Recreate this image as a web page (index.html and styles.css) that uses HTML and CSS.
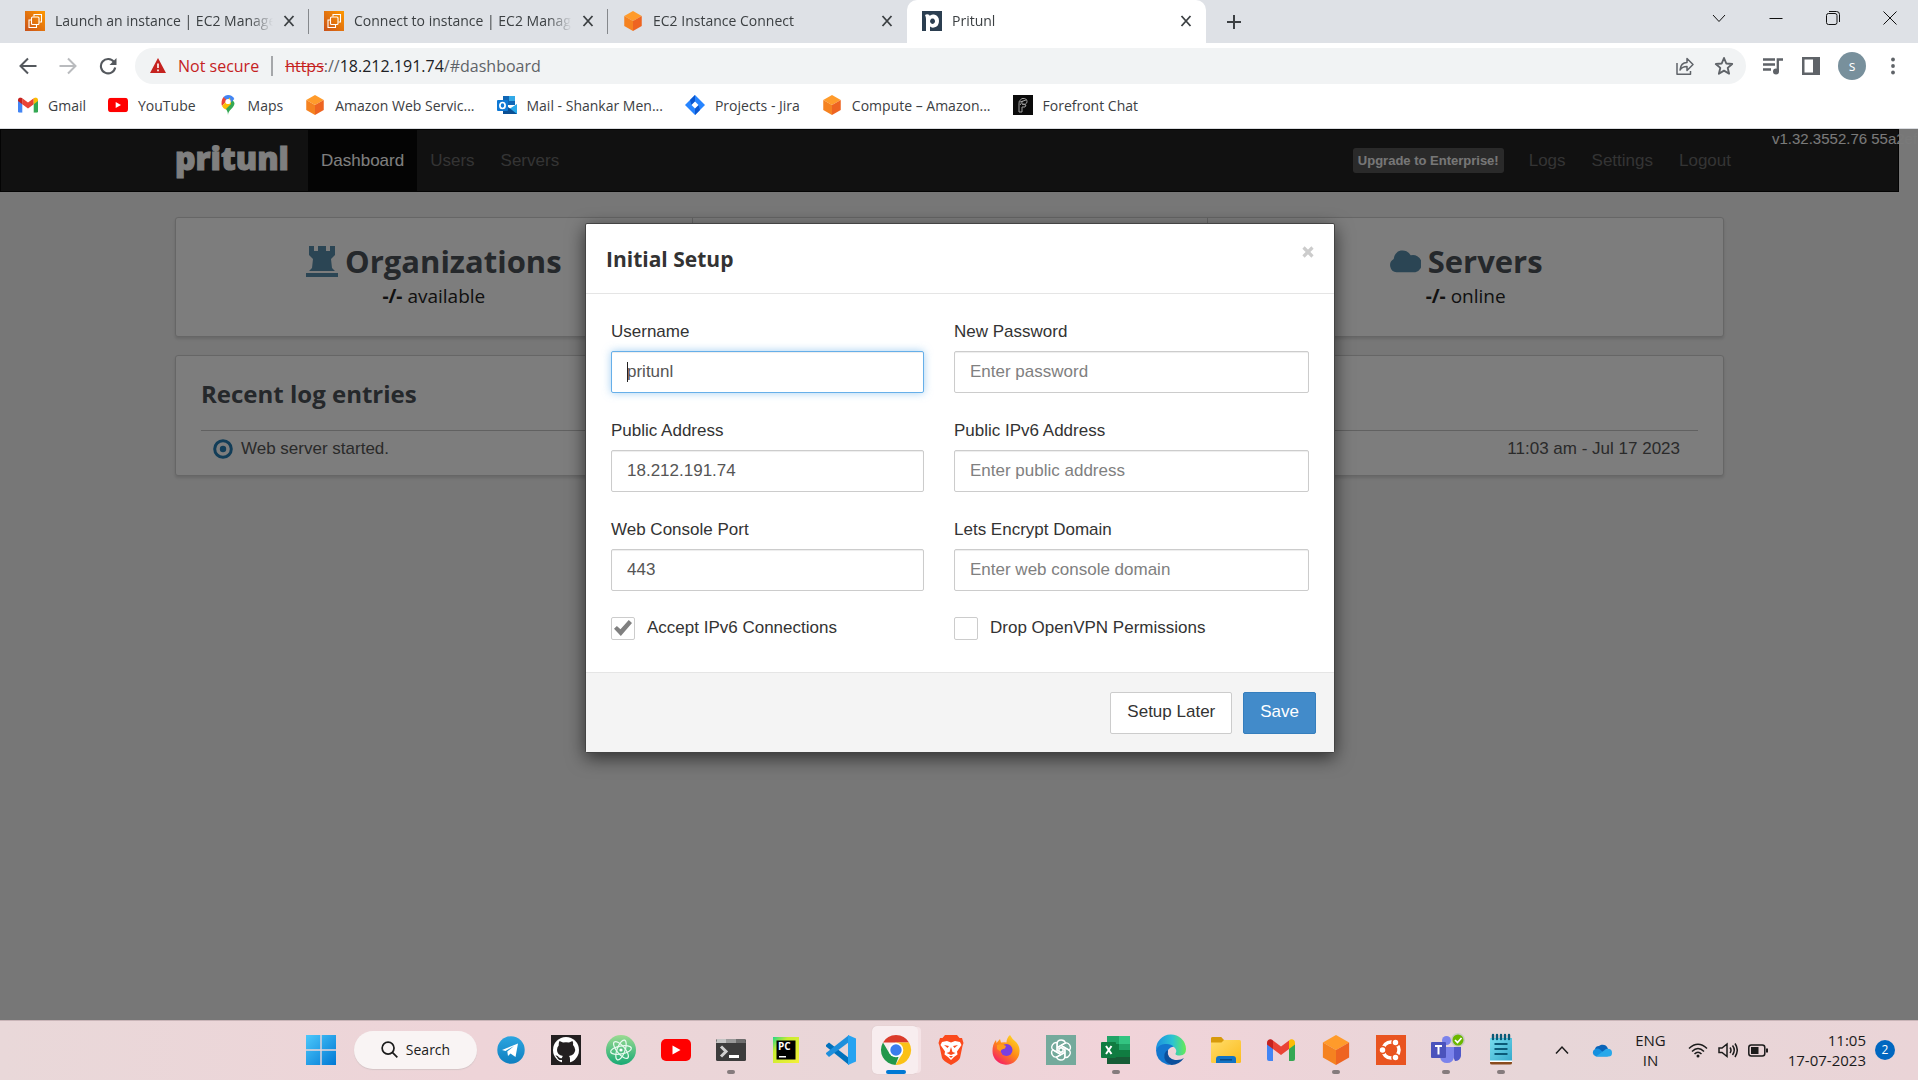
FILE: index.html
```html
<!DOCTYPE html>
<html lang="en">
<head>
<meta charset="utf-8">
<title>Pritunl</title>
<link rel="stylesheet" href="styles.css">
</head>
<body>
<svg class="sprite" aria-hidden="true">
  <defs>
    <linearGradient id="g-ec2" x1="0" y1="1" x2="1" y2="0"><stop offset="0" stop-color="#c8511b"/><stop offset="1" stop-color="#f90"/></linearGradient>
    <linearGradient id="g-win" x1="0" y1="0" x2="1" y2="1"><stop offset="0" stop-color="#4cc8fb"/><stop offset="1" stop-color="#0078d4"/></linearGradient>
    <linearGradient id="g-tg" x1="0" y1="0" x2="0" y2="1"><stop offset="0" stop-color="#2ca5e0"/><stop offset="1" stop-color="#0f7fc0"/></linearGradient>
    <linearGradient id="g-atom" x1="0" y1="0" x2="0" y2="1"><stop offset="0" stop-color="#9bdb92"/><stop offset="1" stop-color="#17a974"/></linearGradient>
    <linearGradient id="g-pc" x1="0" y1="0" x2="1" y2="1"><stop offset="0" stop-color="#21d789"/><stop offset=".3" stop-color="#c8ec30"/><stop offset="1" stop-color="#f4f03a"/></linearGradient>
    <linearGradient id="g-ff" x1=".9" y1="0" x2=".2" y2="1"><stop offset="0" stop-color="#ffe226"/><stop offset=".5" stop-color="#ff8a16"/><stop offset="1" stop-color="#f5156c"/></linearGradient>
    <linearGradient id="g-edge" x1="0" y1="0" x2="1" y2="0"><stop offset="0" stop-color="#1b8fe0"/><stop offset=".55" stop-color="#2bc3d2"/><stop offset="1" stop-color="#66eb55"/></linearGradient>
    <linearGradient id="g-fold" x1="0" y1="0" x2="1" y2="1"><stop offset="0" stop-color="#ffdc6a"/><stop offset="1" stop-color="#fcbc1d"/></linearGradient>
    <linearGradient id="g-note" x1="0" y1="0" x2="1" y2="1"><stop offset="0" stop-color="#78def0"/><stop offset="1" stop-color="#35a9cb"/></linearGradient>
  </defs>
  <symbol id="i-x" viewBox="0 0 12 12"><path d="M1.500 1l9 10M10.500 1l-9 10" fill="none" stroke="currentColor" stroke-width="1.800"/></symbol>
  <symbol id="i-ec2" viewBox="0 0 20 20"><path fill="url(#g-ec2)" d="M0 0h20v20H0z"/><g fill="none" stroke="#fff" stroke-width="1.100"><rect x="6.500" y="6" width="7.500" height="7.500" rx="1"/><path d="M9 5.500V3.500h7.500V11H14.500M11.500 14v2.500H4V9H6"/></g></symbol>
  <symbol id="i-cube" viewBox="0 0 30 32"><path fill="#ff9b2b" d="M15 0l14 8-14 8L1 8z"/><path fill="#f58220" d="M1 8l14 8v16L1 24z"/><path fill="#ee6421" d="M29 8l-14 8v16l14-8z"/></symbol>
  <symbol id="i-gmail" viewBox="0 0 28 22"><path fill="#4285f4" d="M0 4l6 4v14H2a2 2 0 0 1-2-2z"/><path fill="#34a853" d="M28 4l-6 4v14h4a2 2 0 0 0 2-2z"/><path fill="#ea4335" d="M6 1.500l8 6 8-6V10l-8 6-8-6z"/><path fill="#c5221f" d="M0 4C0 0 4-.5 6 1.500V10L0 5.500z"/><path fill="#fbbc04" d="M28 4c0-4-4-4.500-6-2.500V10l6-4.500z"/></symbol>
  <symbol id="i-yt" viewBox="0 0 30 22"><rect width="30" height="22" rx="5" fill="#f00"/><path fill="#fff" d="M11.500 6.500v9l8-4.500z"/></symbol>
</svg>

<header class="browser">
  <div class="tabstrip">
    <div class="tab">
      <svg class="fav"><use href="#i-ec2"/></svg><span class="tab-title">Launch an instance | EC2 Manage</span>
      <button class="tab-x" aria-label="Close tab"><svg><use href="#i-x"/></svg></button>
    </div>
    <div class="tab">
      <svg class="fav"><use href="#i-ec2"/></svg><span class="tab-title">Connect to instance | EC2 Manag</span>
      <button class="tab-x" aria-label="Close tab"><svg><use href="#i-x"/></svg></button>
    </div>
    <div class="tab plain">
      <svg class="fav"><use href="#i-cube"/></svg><span class="tab-title">EC2 Instance Connect</span>
      <button class="tab-x" aria-label="Close tab"><svg><use href="#i-x"/></svg></button>
    </div>
    <div class="tab active">
      <svg class="fav" viewBox="0 0 20 20"><path fill="#2b3e50" d="M0 0h20v20H0z"/><path fill="#fff" fill-rule="evenodd" d="M3 4q2-1.500 4.500 0v1Q9 3 12 3.500q5 1 5 6.500t-5 6.500q-2.500.5-4-1V20H4V8q0-2-1-4zm7.500 3.500a2.500 2.700 0 1 0 .1 0z"/></svg><span class="tab-title">Pritunl</span>
      <button class="tab-x" aria-label="Close tab"><svg><use href="#i-x"/></svg></button>
    </div>
    <button class="new-tab" aria-label="New tab"><svg viewBox="0 0 16 16"><path d="M8 1v14M1 8h14" stroke="currentColor" stroke-width="2"/></svg></button>
    <div class="win-controls">
      <button aria-label="Search tabs"><svg viewBox="0 0 14 14"><path d="M1 4l6 6.500L13 4"/></svg></button>
      <button aria-label="Minimize"><svg viewBox="0 0 14 14"><path d="M.5 7.500h13"/></svg></button>
      <button aria-label="Restore"><svg viewBox="0 0 14 14"><rect x=".5" y="2.500" width="10.500" height="11" rx="2"/><path d="M3 .5h7.500q3 0 3 3V11"/></svg></button>
      <button aria-label="Close"><svg viewBox="0 0 14 14"><path d="M.5.5l13 13M13.500.5l-13 13"/></svg></button>
    </div>
  </div>
  <div class="toolbar">
    <button class="nav-btn" aria-label="Back"><svg viewBox="0 0 18 18"><path d="M17.500 9h-16M9 1.500L1.500 9 9 16.500" fill="none" stroke="#54585d" stroke-width="2"/></svg></button>
    <button class="nav-btn" aria-label="Forward"><svg viewBox="0 0 18 18"><path d="M.5 9h16M9 1.500L16.500 9 9 16.500" fill="none" stroke="#b9bbbe" stroke-width="2"/></svg></button>
    <button class="nav-btn" aria-label="Reload"><svg viewBox="0 0 18 18"><path d="M15 5A7.200 7.200 0 1 0 16.200 10.500" fill="none" stroke="#54585d" stroke-width="2.100"/><path fill="#54585d" d="M17.500 1v7h-7z"/></svg></button>
    <div class="omnibox">
      <svg class="warn" viewBox="0 0 16 15"><path fill="#c5221f" d="M8 0l8 15H0z"/><path d="M8 5.500v4.500M8 11.500v1.800" stroke="#fff" stroke-width="1.600"/></svg>
      <span class="insecure">Not secure</span>
      <span class="url"><s>https</s>://<b>18.212.191.74</b>/#dashboard</span>
      <button aria-label="Share"><svg viewBox="0 0 20 20"><path d="M3 7v11.200h13.500V15" /><path d="M6 14c.5-5 3-7.500 7-7.500V2.500l6 6-6 6v-4c-3 0-5.500 1-7 3.500z"/></svg></button>
      <button aria-label="Bookmark"><svg viewBox="0 0 20 20"><path stroke-width="1.900" d="M10 2l2.300 5.500 5.900.5-4.500 3.900 1.400 5.800L10 14.600l-5.100 3.100 1.400-5.800L1.800 8l5.900-.5z"/></svg></button>
    </div>
    <div class="ext">
      <button aria-label="Media"><svg viewBox="0 0 20 18"><path d="M0 2.500h12M0 7.500h12M0 12.500h8M14.800 14V2.500H20" fill="none" stroke="#5f6368" stroke-width="2.300"/><ellipse cx="13" cy="14.500" rx="3" ry="3" fill="#5f6368"/></svg></button>
      <button aria-label="Side panel"><svg viewBox="0 0 20 18"><path fill="#5f6368" fill-rule="evenodd" d="M1 0h18v18H1zm2.500 2.500v13h8.500v-13z"/></svg></button>
      <button class="avatar" aria-label="Profile">s</button>
      <button aria-label="Menu"><svg viewBox="0 0 20 18"><circle cx="10" cy="2.500" r="1.900" fill="#5f6368"/><circle cx="10" cy="9" r="1.900" fill="#5f6368"/><circle cx="10" cy="15.500" r="1.900" fill="#5f6368"/></svg></button>
    </div>
  </div>
  <nav class="bookmarks" aria-label="Bookmarks">
    <a href="#"><svg viewBox="0 -3 28 28"><use href="#i-gmail" width="28" height="22"/></svg>Gmail</a>
    <a href="#"><svg viewBox="0 -4 30 30"><use href="#i-yt" width="30" height="22"/></svg>YouTube</a>
    <a href="#"><svg viewBox="0 0 20 20"><path fill="#34a853" d="M10 20c0-4-2-6-4-8.500L13.500 3l3 5c0 5-6.500 7-6.500 12z"/><path fill="#4285f4" d="M10 0q4.500 0 6.300 4L10 10 5.500 2Q7.500 0 10 0z"/><path fill="#ea4335" d="M5.500 2L9 5.500 4 11Q2.500 6 5.500 2z"/><path fill="#fbbc04" d="M4 11l8-8.500L13 9l-5.500 5.500Q5 13 4 11z"/><circle cx="10" cy="6.500" r="2.600" fill="#fff"/></svg>Maps</a>
    <a href="#"><svg><use href="#i-cube"/></svg>Amazon Web Servic...</a>
    <a href="#"><svg viewBox="0 0 20 20"><path fill="#1066b5" d="M6 1h12v9H6z"/><path fill="#32a9e7" d="M12 1h6v5h-6z"/><path fill="#28a8ea" d="M6 9l7 4.500L20 9v10H6z"/><path fill="#0a4f94" d="M6 9l7 4.500L20 19H6z"/><rect y="5" width="11" height="11" rx="1" fill="#0f78d4"/><ellipse cx="5.500" cy="10.500" rx="2.600" ry="3" fill="none" stroke="#fff" stroke-width="1.700"/></svg>Mail - Shankar Men...</a>
    <a href="#"><svg viewBox="0 0 20 20"><path fill="#2684ff" d="M10 0l10 10-10 10L0 10z"/><path fill="#0b57d0" d="M10 0v7l-3.500 3L5 5zM10 20v-7l3.500-3 1.500 5z"/><path fill="#fff" d="M10 6.500l3.500 3.500-3.500 3.500L6.500 10z"/></svg>Projects - Jira</a>
    <a href="#"><svg><use href="#i-cube"/></svg>Compute – Amazon...</a>
    <a href="#"><svg viewBox="0 0 20 20"><path fill="#0b0b0b" d="M0 0h20v20H0z"/><path d="M6 17V9q-1-3 3-5.500 5-.5 5 3T9 9l4 1q0 3-4 2v5zM7 7l6-2M7 10l3-4" fill="none" stroke="#a0a0a0"/></svg>Forefront Chat</a>
  </nav>
</header>

<main class="viewport">
  <div class="page">
    <div class="navbar">
      <div class="container navbar-in">
        <a class="logo" href="#">pritunl</a>
        <a class="nav-link current" href="#">Dashboard</a>
        <a class="nav-link" href="#">Users</a>
        <a class="nav-link" href="#">Servers</a>
        <div class="nav-right">
          <a class="upgrade" href="#">Upgrade to Enterprise!</a>
          <a class="nav-link" href="#">Logs</a>
          <a class="nav-link" href="#">Settings</a>
          <a class="nav-link" href="#">Logout</a>
        </div>
      </div>
      <span class="version">v1.32.3552.76 55a2ef</span>
    </div>
    <div class="container content">
      <section class="card stats">
        <div class="stat">
          <h2><svg viewBox="0 0 32 32"><path fill="#568ba8" d="M3 1h5v5h4V1h8v5h4V1h5v9l-4 4 1 9 3 3H3l3-3 1-9-4-4zM0 28h32v4H0z"/></svg>Organizations</h2>
          <p><b>-/-</b> available</p>
        </div>
        <div class="stat">
          <h2>Users</h2>
          <p><b>-/-</b> online</p>
        </div>
        <div class="stat">
          <h2><svg viewBox="0 0 34 32"><path fill="#568ba8" d="M8 28a7.500 7.500 0 0 1-3-14 9.500 9.500 0 0 1 18-4 9 9 0 0 1 5 18z"/></svg>Servers</h2>
          <p><b>-/-</b> online</p>
        </div>
      </section>
      <section class="card log">
        <h3>Recent log entries</h3>
        <div class="entry">
          <svg viewBox="0 0 20 20"><circle cx="10" cy="10" r="8.300" fill="none" stroke="#257bb0" stroke-width="3"/><circle cx="10" cy="10" r="3.200" fill="#257bb0"/></svg>
          <span>Web server started.</span>
          <time>11:03 am - Jul 17 2023</time>
        </div>
      </section>
    </div>
  </div>
  <div class="backdrop">
    <form class="modal" role="dialog" aria-label="Initial Setup">
      <div class="modal-head">
        <h1>Initial Setup</h1>
        <button type="button" class="modal-x" aria-label="Close"><svg viewBox="0 0 12 12"><path d="M1.500 1.500l9 9M10.500 1.500l-9 9" stroke="#ccc" stroke-width="3.200"/></svg></button>
      </div>
      <div class="modal-body">
        <div class="field focused"><label for="user">Username</label><input id="user" type="text" value="pritunl"><i class="caret"></i></div>
        <div class="field"><label for="pass">New Password</label><input id="pass" type="password" placeholder="Enter password"></div>
        <div class="field"><label for="addr">Public Address</label><input id="addr" type="text" value="18.212.191.74"></div>
        <div class="field"><label for="addr6">Public IPv6 Address</label><input id="addr6" type="text" placeholder="Enter public address"></div>
        <div class="field"><label for="port">Web Console Port</label><input id="port" type="text" value="443"></div>
        <div class="field"><label for="dom">Lets Encrypt Domain</label><input id="dom" type="text" placeholder="Enter web console domain"></div>
        <label class="check"><input type="checkbox" checked>Accept IPv6 Connections</label>
        <label class="check"><input type="checkbox">Drop OpenVPN Permissions</label>
      </div>
      <div class="modal-foot">
        <button type="button" class="btn">Setup Later</button>
        <button type="button" class="btn primary">Save</button>
      </div>
    </form>
  </div>
</main>

<footer class="taskbar">
  <button class="app" aria-label="Start"><svg viewBox="0 0 30 30"><path fill="url(#g-win)" d="M0 0h14.300v14.300H0zM15.700 0H30v14.300H15.700zM0 15.700h14.300V30H0zM15.700 15.700H30V30H15.700z"/></svg></button>
  <button class="search"><svg viewBox="0 0 18 18"><circle cx="7.500" cy="7.500" r="6.300"/><path d="M12 12l5.300 5.300"/></svg>Search</button>
  <div class="apps">
    <button class="app" aria-label="Telegram"><svg viewBox="0 0 30 30"><circle cx="15" cy="15" r="13.700" fill="url(#g-tg)"/><path fill="#fff" d="M6 15L22 8.500 19.500 22l-5-3.500-2.500 2.500-.7-4.500L18 11l-8.500 5z"/></svg></button>
    <button class="app" aria-label="GitHub"><svg viewBox="0 0 30 30"><path fill="#231f20" d="M0 0h30v30H0z"/><circle cx="15" cy="15" r="13" fill="#fff"/><path fill="#231f20" d="M8.500 6l3.500 1.500q3-.7 6 0L21.500 6q1 2 .5 4 4 4.500.5 9-1.500 1.700-4.500 2 1 1 1 3v4h-8v-3q-4 .6-5-3-1.500-1-1.500-1.500 2-.5 3.500 2 1.500 1 3 .4 0-1.500 1-2-6-1-6-6 0-3 1.700-4.500-.4-2 .8-4.400z"/></svg></button>
    <button class="app" aria-label="Atom"><svg viewBox="0 0 30 30"><circle cx="15" cy="15" r="15" fill="url(#g-atom)"/><g fill="none" stroke="#e8f9ef" stroke-width="1.200"><ellipse cx="15" cy="15" rx="4" ry="10.500" transform="rotate(20 15 15)"/><ellipse cx="15" cy="15" rx="4" ry="10.500" transform="rotate(80 15 15)"/><ellipse cx="15" cy="15" rx="4" ry="10.500" transform="rotate(140 15 15)"/></g><circle cx="15" cy="15" r="1.600" fill="#fff"/></svg></button>
    <button class="app" aria-label="YouTube"><svg viewBox="0 -4 30 30"><use href="#i-yt" width="30" height="22"/></svg></button>
    <button class="app running" aria-label="Terminal"><svg viewBox="0 0 30 30"><rect y="4" width="30" height="22" rx="1.500" fill="#3c3c3c"/><path fill="#c4c4c4" d="M1 4h9v4H0z"/><path fill="#999" d="M10 4h10v4H10z"/><path fill="#6d6d6d" d="M20 4h9l1 4H20z"/><path d="M5 11.500l5 5-5 5" fill="none" stroke="#d0d0d0" stroke-width="3"/><path fill="#fff" d="M13 20h10v3H13z"/></svg></button>
    <button class="app" aria-label="PyCharm"><svg viewBox="0 0 30 30"><path fill="url(#g-pc)" d="M2 2h26v26H2z"/><path fill="#000" d="M5.500 5.500h19v19h-19z"/><path fill="#fff" d="M8 21h7v1.500H8z"/><text x="7" y="15" font-size="10" font-weight="700" fill="#fff">PC</text></svg></button>
    <button class="app" aria-label="Visual Studio Code"><svg viewBox="0 0 30 30"><path fill="#0071bc" d="M0 10l3-2.500L23 23v7L0 11.500z"/><path fill="#1e8fdc" d="M0 19l3 3L23 7V0L0 18z"/><path fill="#26a3f1" d="M22 0l8 3.500v23L22 30z"/></svg></button>
    <button class="app running here" aria-label="Google Chrome"><svg viewBox="0 0 30 30"><path fill="#db3b2b" d="M2 7.500a15 15 0 0 1 26 0H15z"/><path fill="#fbc116" d="M28 7.500A15 15 0 0 1 14.500 30L21.500 18.500 15 7.500z"/><path fill="#22974b" d="M2 7.500L8.500 18.500 17.500 22 14.500 30A15 15 0 0 1 2 7.500z"/><circle cx="15" cy="15" r="7.300" fill="#fff"/><circle cx="15" cy="15" r="5.700" fill="#3b7ded"/></svg></button>
    <button class="app" aria-label="Brave"><svg viewBox="0 0 30 30"><path fill="#fb4a1d" d="M9 0h12l2.500 3H26l1.500 5-1 3L24 23q-1 3-9 7-8-4-9-7L3.500 11l-1-3L4 3h2.500z"/><path fill="#fff" d="M6 7l5-1 4 1.500L19 6l5 1 1.500 3-4.500 6.500.5 3-3.500 2.500-3 3-3-3-3.500-2.500.5-3L4.500 10z"/><path fill="#fb4a1d" d="M8 10l5 1-1.500 2zM22 10l-5 1 1.500 2zM15 12l1.500 5 3 1-4.500 2-4.500-2 3-1zM13 21h4l-2 2z"/></svg></button>
    <button class="app" aria-label="Firefox"><svg viewBox="0 0 30 30"><path fill="url(#g-ff)" d="M19 0q2 4 6 7 4 4.500 3.500 9.500A13.500 13.500 0 0 1 1.500 16Q1.500 9 5 5l.5 3L9 4l1 3.500q4-.5 5.500 0Q15.500 3 19 0z"/><circle cx="15.500" cy="15" r="6" fill="#7a3fe0"/><path fill="#ff9a1c" d="M6 10q5-2 9 1l-1 2.500q-4 .5-4.500 3L6 14z"/></svg></button>
    <button class="app" aria-label="ChatGPT"><svg viewBox="0 0 30 30"><path fill="#74aa9c" d="M0 0h30v30H0z"/><g fill="none" stroke="#fff" stroke-width="1.300"><path id="petal" d="M11 17.300v-8q0-4.300 4.200-4.300 3.300 0 4.300 3l-6.500 3.700v5"/><use href="#petal" transform="rotate(60 15 15)"/><use href="#petal" transform="rotate(120 15 15)"/><use href="#petal" transform="rotate(180 15 15)"/><use href="#petal" transform="rotate(240 15 15)"/><use href="#petal" transform="rotate(300 15 15)"/></g></svg></button>
    <button class="app running" aria-label="Excel"><svg viewBox="0 0 30 30"><path fill="#21a366" d="M6 1h12v8H6z"/><path fill="#33c481" d="M18 1h11v8H18z"/><path fill="#107c41" d="M6 9h23v13H6z"/><path fill="#21a366" d="M18 9h11v6H18z"/><path fill="#185c37" d="M6 22h23v7H6z"/><rect y="7" width="15" height="16" rx="1" fill="#107c41"/><path d="M5 11l5.500 8M10.500 11L5 19" stroke="#fff" stroke-width="2"/></svg></button>
    <button class="app" aria-label="Edge"><svg viewBox="0 0 30 30"><path fill="url(#g-edge)" d="M0 15a15 15 0 0 1 30-1q0 6-6 6.500-5 0-4.500-2 2-3-1-6Q12 8 4 12q-3 2-4 3z"/><path fill="#1377cf" d="M0 15q3-6 9-6 6-.5 8.500 2.500Q11 13 11 19q.5 7 9 9-4 2.500-9 1.500Q0 26 0 15z"/><path fill="#0c4f9c" d="M12 15q-1.500 8 7 10 6 .5 9-2-5 7-12.500 7Q7 27 8.500 19q1-3 3.500-4z"/></svg></button>
    <button class="app" aria-label="File Explorer"><svg viewBox="0 0 30 30"><path fill="#d79a0b" d="M0 4q0-2 2-2h8l3 4v5H0z"/><rect y="5" width="30" height="23" rx="1.500" fill="url(#g-fold)"/><path fill="#d79a0b" d="M0 4q0-2 2-2h8l3 3-2.500 2.500H0z"/><path fill="#1273c4" d="M5 28v-4q0-3 3-3h14q3 0 3 3v4z"/><path fill="#0a4b86" d="M9 24h12v1.500H9z"/></svg></button>
    <button class="app" aria-label="Gmail"><svg viewBox="-1 -4 30 30"><use href="#i-gmail" width="28" height="22"/></svg></button>
    <button class="app running" aria-label="AWS"><svg><use href="#i-cube"/></svg></button>
    <button class="app" aria-label="Ubuntu"><svg viewBox="0 0 30 30"><path fill="#e95420" d="M0 0h30v30H0z"/><circle cx="15" cy="15" r="8" fill="none" stroke="#fff" stroke-width="3.500"/><g fill="#fff" stroke="#e95420" stroke-width="1.500"><circle cx="6.500" cy="15" r="3.500"/><circle cx="19.500" cy="7.500" r="3.500"/><circle cx="19.500" cy="22.500" r="3.500"/></g></svg></button>
    <button class="app running" aria-label="Teams"><svg viewBox="0 0 30 30"><circle cx="15.500" cy="5.500" r="4.500" fill="#7b83eb"/><path fill="#5059c9" d="M18 12h12v9q-1 5-6 5z"/><path fill="#7b83eb" d="M9 12h14v10q-1 6-7 6t-7-6z"/><rect y="7" width="15" height="16" rx="1" fill="#4b53bc"/><path d="M4 11h7M7.500 11v8.500" stroke="#fff" stroke-width="2"/><circle cx="27" cy="5" r="7" fill="#c9c9c4"/><circle cx="27" cy="5" r="5.500" fill="#6bb700"/><path d="M24 5l2.500 2.500L30.500 3" fill="none" stroke="#fff" stroke-width="1.700"/></svg></button>
    <button class="app running" aria-label="Notepad"><svg viewBox="0 0 30 30"><path fill="url(#g-note)" d="M4 3h22v23H4z"/><path fill="#8a4b1d" d="M4 27h22v1q0 1.500-2 1.500H6q-2 0-2-1.500z"/><path fill="#fff" d="M4 25.500h22V27H4z"/><path d="M8.500 9h13M8.500 14h13M8.500 19h13" stroke="#0a5a78" stroke-width="2"/><path d="M7 0v4M11 0v4M15 0v4M19 0v4M23 0v4" stroke="#0a5a78" stroke-width="2.400" stroke-linecap="round"/></svg></button>
  </div>
  <div class="tray">
    <svg class="t-up" viewBox="0 0 14 10"><path d="M1 8.500l6-6.500 6 6.500"/></svg>
    <svg class="t-cloud" viewBox="0 0 20 14"><path fill="#0a63b8" d="M3 6a4 4 0 0 1 4-3 5.500 5.500 0 0 1 9 3l-6 4z"/><path fill="#1490df" d="M4 13.500A4 4 0 0 1 3 6q3-1 5 .5l8 7z"/><path fill="#28a8ea" d="M4 13.500L14 6q6-1 6 4 0 3.500-3.500 3.500z"/></svg>
    <span class="lang">ENG<br>IN</span>
    <svg class="t-ico" viewBox="0 0 20 20"><path d="M1 8.500q9-8.500 18 0M4 11.500q6-6 12 0M6.500 14q3.500-3.500 7 0"/><circle cx="10" cy="16" r="1.500" fill="#1b1b1b" stroke="none"/></svg>
    <svg class="t-ico" viewBox="0 0 20 20"><path d="M1 8v4.500h3l5 4V4L4 8zM12 7.500q2 2.700 0 5.500M14.500 5.500q3.500 4.500 0 9.500M17 3.500q4.500 6.500 0 13.500"/></svg>
    <svg class="t-ico" viewBox="0 0 20 20"><rect x=".8" y="5" width="16" height="11" rx="2.500"/><path fill="#1b1b1b" stroke="none" d="M3 7h7.500v7H3zM18 8.500h2v4h-2z"/></svg>
    <span class="clock">11:05<br>17-07-2023</span>
    <span class="badge">2</span>
  </div>
</footer>
</body>
</html>
```
FILE: styles.css
```css
* { box-sizing: border-box; }
body {
  margin: 0;
  min-height: 100vh;
  display: flex;
  flex-direction: column;
  font-family: "Open Sans", "Noto Sans", sans-serif;
  font-size: 14px;
  color: #3c4043;
  overflow-x: hidden;
}
button { border: 0; padding: 0; background: none; font: inherit; color: inherit; }
a { color: inherit; text-decoration: none; }
h1, h2, h3, p { margin: 0; }
svg { display: block; flex: none; }
.sprite { position: absolute; width: 0; height: 0; }

/* Browser window */
.browser { background: #fff; border-bottom: 1px solid #dadce0; }
.tabstrip { display: flex; height: 43px; background: #dee1e6; padding-left: 10px; }
.tab {
  position: relative;
  display: flex;
  align-items: center;
  width: 299px;
  padding: 6px 14px 8px 15px;
  gap: 10px;
}
.tab:nth-child(-n+2)::after {
  content: "";
  position: absolute;
  right: 0;
  top: 9px;
  width: 1px;
  height: 25px;
  background: #85888c;
}
.tab.active { background: #fff; border-radius: 10px 10px 0 0; }
.fav { width: 20px; height: 20px; }
.tab-title {
  flex: 1;
  overflow: hidden;
  white-space: nowrap;
  mask-image: linear-gradient(to right, #000 calc(100% - 24px), transparent);
}
.tab-x { width: 12px; height: 12px; }
.tab-x svg { width: 12px; height: 12px; }
.new-tab { width: 16px; margin-left: 20px; }
.new-tab svg { width: 16px; height: 16px; }
.win-controls { display: flex; margin-left: auto; height: 36px; }
.win-controls button { width: 57px; display: grid; place-items: center; }
.win-controls svg { width: 14px; height: 14px; fill: none; stroke: #111; }

.toolbar { display: flex; align-items: center; height: 45px; padding: 0 14px 0 8px; }
.nav-btn { width: 40px; display: grid; place-items: center; }
.nav-btn svg { width: 18px; height: 18px; }
.omnibox {
  flex: 1;
  display: flex;
  align-items: center;
  height: 36px;
  margin-left: 7px;
  padding: 0 12px 0 15px;
  border-radius: 18px;
  background: #f1f3f4;
  font-size: 16px;
  color: #5f6368;
}
.warn { width: 16px; height: 15px; }
.insecure { margin-left: 12px; padding-right: 12px; border-right: 2px solid #a5a7aa; line-height: 20px; color: #c5221f; }
.url { flex: 1; margin-left: 12px; }
.url s { color: #c5221f; }
.url b { font-weight: 400; color: #202124; }
.omnibox button { margin-left: 20px; }
.omnibox button svg { width: 20px; height: 20px; fill: none; stroke: #5f6368; stroke-width: 1.5; stroke-linejoin: round; }
.ext { display: flex; align-items: center; gap: 16px; margin-left: 16px; }
.ext button { display: grid; place-items: center; width: 22px; }
.ext svg { width: 20px; height: 18px; }
.ext .avatar { width: 28px; height: 28px; border-radius: 50%; background: #78909c; color: #fff; line-height: 26px; }

.bookmarks { display: flex; align-items: center; height: 40px; padding: 0 18px 6px; gap: 22px; }
.bookmarks a { display: flex; align-items: center; gap: 10px; }
.bookmarks svg { width: 20px; height: 20px; }

/* Web page */
.viewport { position: relative; flex: 1; display: flex; font-family: "Liberation Sans", Arial, sans-serif; font-size: 17px; line-height: 24px; color: #333; }
.page { flex: 1; padding-right: 19px; background: #eee; }
.container { width: 1549px; max-width: 92%; margin: 0 auto; }
.navbar { position: relative; height: 63px; background: #222; border: 1px solid #080808; }
.navbar-in { display: flex; height: 100%; align-items: center; color: #696969; }
.logo { width: 133px; padding-bottom: 5px; font: 800 32px/40px "Open Sans", sans-serif; color: #fff; -webkit-text-stroke: 1px #fff; }
.nav-link { display: flex; align-items: center; height: 100%; padding: 0 13px; }
.current { background: #080808; color: #fff; }
.nav-right { display: flex; align-items: center; height: 100%; margin-left: auto; margin-right: -20px; }
.upgrade { margin-right: 12px; padding: 0 5px; border-radius: 3px; background: #555; color: #eee; font-size: 13px; font-weight: 700; line-height: 25px; }
.version { position: absolute; left: calc(100% - 126px); top: 0; font-size: 15px; line-height: 18px; color: #f4f4f4; white-space: nowrap; }
.content { display: grid; gap: 18px; padding-top: 25px; }
.card { background: #fafafa; border: 1px solid #ccc; border-radius: 3px; box-shadow: 0 2px 3px rgba(0, 0, 0, .12); }
.stats { display: grid; grid-template-columns: repeat(3, 1fr); height: 120px; }
.stat { padding-top: 23px; text-align: center; font-family: "Open Sans", sans-serif; }
.stat + .stat { border-left: 1px solid #ccc; }
.stat h2 { display: flex; justify-content: center; align-items: center; gap: 7px; font-size: 31px; line-height: 40px; color: #4a5056; }
.stat h2 svg { width: 32px; height: 32px; }
.stat p { font-size: 19px; line-height: 30px; color: #222; }
.log { height: 121px; padding: 20px 25px 0; }
.log h3 { font: 700 24px/36px "Open Sans", sans-serif; color: #4a5056; }
.entry { display: flex; align-items: center; gap: 8px; margin-top: 18px; padding: 6px 18px 0 12px; border-top: 1px solid #c2c2c2; color: #555; }
.entry svg { width: 20px; height: 20px; }
.entry time { margin-left: auto; }

/* Dialog */
.backdrop { position: absolute; inset: 0; display: flex; justify-content: center; align-items: flex-start; background: rgba(0, 0, 0, .5); padding: 94px 0 0 2px; }
.modal { width: 750px; background: #fff; border: 1px solid #444; border-radius: 2px; box-shadow: 0 5px 18px rgba(0, 0, 0, .6); }
.modal-head { display: flex; justify-content: space-between; align-items: flex-start; height: 70px; padding: 20px 20px 0; border-bottom: 1px solid #e5e5e5; }
.modal-head h1 { font: 700 21px/30px "Open Sans", sans-serif; }
.modal-x { margin-top: 2px; }
.modal-x svg { width: 12px; height: 12px; }
.modal-body { display: grid; grid-template-columns: 313fr 355fr; column-gap: 30px; row-gap: 25px; padding: 25px 25px 32px; }
.field { position: relative; display: grid; gap: 7px; }
.field label { line-height: 25px; }
.field input {
  width: 100%;
  height: 42px;
  padding: 0 15px;
  border: 1px solid #ccc;
  border-radius: 2px;
  background: #fff;
  box-shadow: inset 0 1px 1px rgba(0, 0, 0, .075);
  font: inherit;
  color: #555;
}
.field input::placeholder { color: #808080; opacity: 1; }
.field.focused input { border-color: #66afe9; box-shadow: inset 0 1px 1px rgba(0, 0, 0, .075), 0 0 9px rgba(102, 175, 233, .6); }
.caret { position: absolute; left: 16px; bottom: 11px; width: 1px; height: 20px; background: #222; }
.check { display: flex; align-items: center; gap: 12px; }
.check input { appearance: none; display: grid; place-items: center; width: 24px; height: 23px; margin: 0; border: 1px solid #ccc; border-radius: 2px; }
.check input:checked::after {
  content: "";
  width: 18px;
  height: 16px;
  background: #808080;
  clip-path: polygon(0 55%, 16% 38%, 36% 58%, 82% 0, 100% 18%, 38% 100%);
}
.modal-foot { display: flex; justify-content: flex-end; gap: 11px; padding: 19px 18px 18px; border-top: 1px solid #e5e5e5; background: #f4f4f4; }
.btn { height: 42px; padding: 0 16px 3px; border: 1px solid #ccc; border-radius: 2px; background: #fff; color: #333; }
.primary { border-color: #357ebd; background: #428bca; color: #fff; }

/* Taskbar */
.taskbar {
  display: flex;
  align-items: center;
  height: 60px;
  padding: 0 23px 2px 293px;
  border-top: 1px solid #c9b5b8;
  background: linear-gradient(90deg, #e9d8d9, #eed4d8 25%, #e9d6d8 45%, #f1d3d9 58%, #e7d6d8 80%, #ead4d7);
  color: #1b1b1b;
}
.app { position: relative; display: grid; place-items: center; width: 55px; height: 48px; }
.app svg { position: relative; width: 30px; height: 30px; overflow: visible; }
.running::after { content: ""; position: absolute; bottom: 0; left: 24px; width: 8px; height: 4px; border-radius: 2px; background: #857b7d; }
.here::before { content: ""; position: absolute; inset: 0 5px 0 4px; border-radius: 5px; background: #f8edef; box-shadow: 4px 0 0 -1px #f5e3e6, 0 0 1px #c9b5b8; }
.here::after { left: 18px; width: 20px; background: #0078d4; }
.search { display: flex; align-items: center; justify-content: center; gap: 8px; width: 123px; height: 38px; margin: 0 6px; border-radius: 19px; background: #f9f4f4; box-shadow: 0 1px 1px #d5c5c7; }
.search svg { width: 17px; height: 17px; fill: none; stroke: #1b1b1b; stroke-width: 1.8; }
.apps { display: flex; }
.tray { display: flex; align-items: center; margin-left: auto; font-size: 15px; line-height: 20px; }
.tray svg { fill: none; stroke: #1b1b1b; stroke-width: 1.5; }
.t-up { width: 14px; height: 10px; margin-right: 23px; }
.tray .t-cloud { width: 20px; height: 14px; stroke: none; margin-right: 23px; }
.lang { text-align: center; margin-right: 22px; }
.t-ico { width: 20px; height: 20px; margin-right: 10px; }
.clock { text-align: right; margin: 0 9px 0 10px; }
.badge { width: 20px; height: 20px; border-radius: 50%; background: #0067c0; color: #fff; font-size: 12px; text-align: center; }
```
